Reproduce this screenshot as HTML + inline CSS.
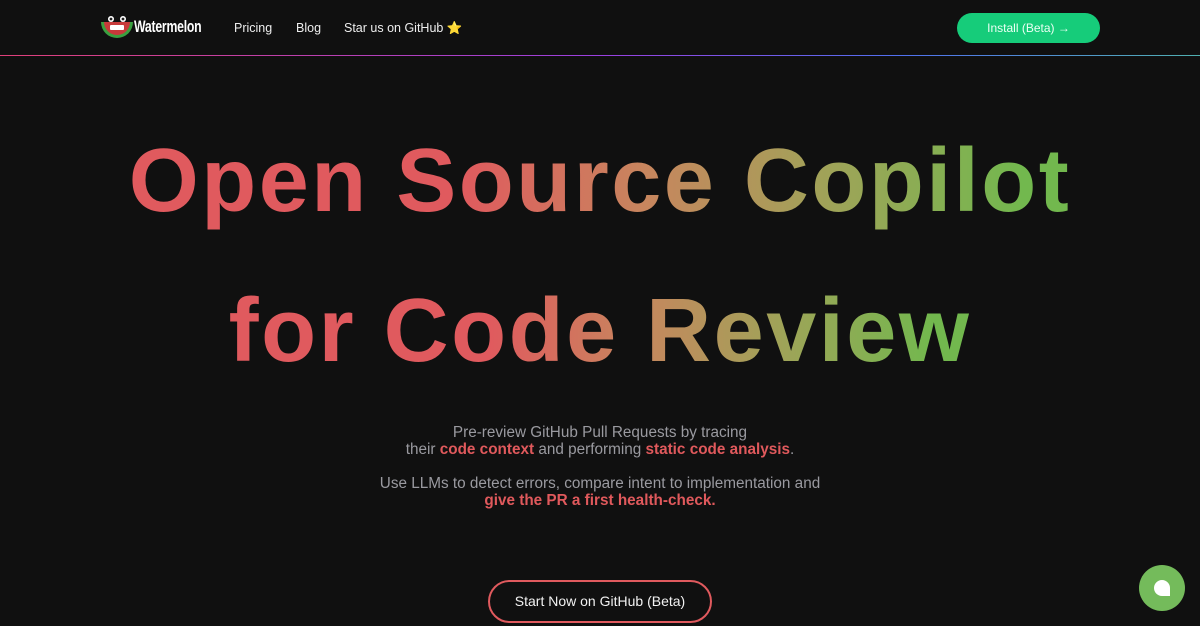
<!DOCTYPE html>
<html><head><meta charset="utf-8"><style>
*{margin:0;padding:0;box-sizing:border-box}
body{width:1200px;height:626px;overflow:hidden;background:#101010;font-family:"Liberation Sans",sans-serif;position:relative}
.nav{position:absolute;left:0;top:0;width:1200px;height:56px}
.line{position:absolute;left:0;top:55px;width:1200px;height:1px;background:linear-gradient(90deg,#e0407a,#9a40e0 50%,#5070f0 75%,#50b0b0)}
.logo{position:absolute;left:100px;top:14px}
.brand{position:absolute;left:134px;top:17px;color:#fff;font-size:17px;font-weight:bold;transform:scaleX(.72);transform-origin:left;letter-spacing:-.3px}
.nl{position:absolute;top:21px;color:#eee;font-size:12.5px}
.inst{position:absolute;left:957px;top:13px;width:143px;height:30px;border-radius:15px;background:#16cc7a;color:#eafff3;font-size:12px;text-align:center;line-height:30px}
h1{position:absolute;left:0;width:1200px;text-align:center;font-size:90px;font-weight:bold;letter-spacing:2.5px;line-height:110px}
h1 span{background:linear-gradient(90deg,#e05a5e 0%,#e05a5e 35%,#c7865e 55%,#9ea458 75%,#72b84e 95%);-webkit-background-clip:text;background-clip:text;color:transparent}
.p{position:absolute;left:0;width:1200px;text-align:center;font-size:15.3px;color:#9a9aa0;line-height:17px}
.p b{color:#e0595c}
.btn{position:absolute;left:488px;top:580px;width:224px;height:43px;border:2px solid #e05a5e;border-radius:22px;color:#f2f2f2;font-size:14px;text-align:center;line-height:39px}
.chat{position:absolute;left:1139px;top:565px;width:46px;height:46px;border-radius:50%;background:#74bb5b}
.chat i{position:absolute;left:15px;top:15px;width:16px;height:16px;background:#fff;border-radius:50% 50% 0 50%}
</style></head><body>
<div class="nav">
<svg class="logo" width="34" height="24" viewBox="0 0 34 24"><path d="M1 8 A16 16 0 0 0 33 8 Z" fill="#3aa040"/><path d="M4 8 A13 13 0 0 0 30 8 Z" fill="#c83a3a"/><rect x="10" y="11" width="14" height="5" rx="1" fill="#fff"/><circle cx="11" cy="5" r="3" fill="#fff"/><circle cx="23" cy="5" r="3" fill="#fff"/><circle cx="11" cy="5" r="1.4" fill="#222"/><circle cx="23" cy="5" r="1.4" fill="#222"/></svg>
<div class="brand">Watermelon</div>
<div class="nl" style="left:234px">Pricing</div>
<div class="nl" style="left:296px">Blog</div>
<div class="nl" style="left:344px">Star us on GitHub ⭐</div>
<div class="inst">Install (Beta) →</div>
</div>
<div class="line"></div>
<h1 style="top:126px"><span>Open Source Copilot</span></h1>
<h1 style="top:276px"><span>for Code Review</span></h1>
<div class="p" style="top:424px">Pre-review GitHub Pull Requests by tracing<br>their <b>code context</b> and performing <b>static code analysis</b>.</div>
<div class="p" style="top:475px">Use LLMs to detect errors, compare intent to implementation and<br><b>give the PR a first health-check.</b></div>
<div class="btn">Start Now on GitHub (Beta)</div>
<div class="chat"><i></i></div>
</body></html>
